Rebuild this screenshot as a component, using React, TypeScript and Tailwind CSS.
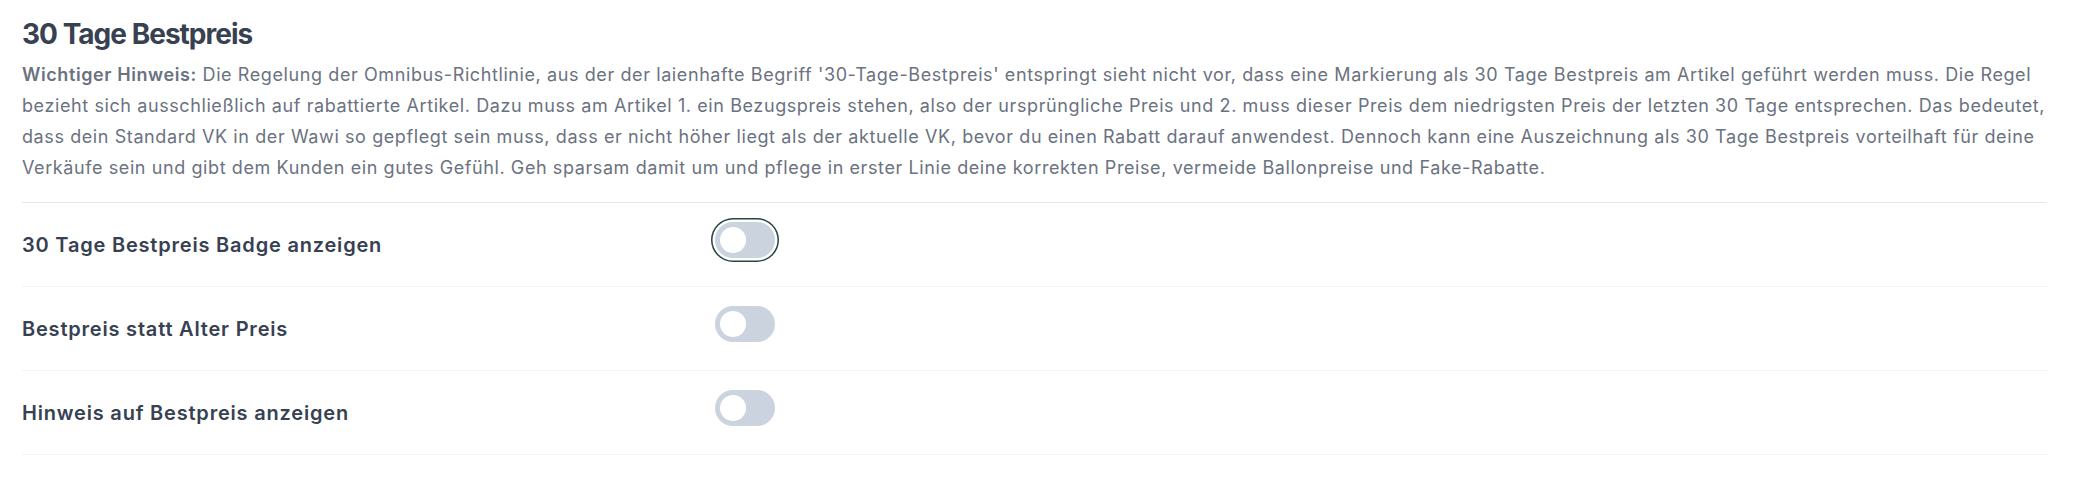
import React, { useState } from 'react';

type Setting = {
  id: string;
  label: string;
  focused?: boolean;
};

const SETTINGS: Setting[] = [
  { id: 'badge', label: '30 Tage Bestpreis Badge anzeigen', focused: true },
  { id: 'statt', label: 'Bestpreis statt Alter Preis' },
  { id: 'hinweis', label: 'Hinweis auf Bestpreis anzeigen' },
];

function Toggle({ on, focused, onChange }: { on: boolean; focused?: boolean; onChange: () => void }) {
  return (
    <button
      type="button"
      role="switch"
      aria-checked={on}
      onClick={onChange}
      className={`relative flex h-[36px] w-[60px] shrink-0 items-center rounded-full px-[5px] transition-colors ${
        on ? 'bg-[#274542]' : 'bg-[#cbd3df]'
      } ${focused ? 'ring-[1.5px] ring-[#274542] ring-offset-[2.5px] ring-offset-white' : ''}`}
    >
      <span
        className={`block h-[26px] w-[26px] rounded-full bg-white transition-transform ${
          on ? 'translate-x-[24px]' : 'translate-x-0'
        }`}
      />
    </button>
  );
}

export default function App() {
  const [values, setValues] = useState<Record<string, boolean>>({
    badge: false,
    statt: false,
    hinweis: false,
  });

  return (
    <div className="min-h-screen bg-white pl-[22px] pr-[29px] font-['Inter',sans-serif]">
      {/* Header */}
      <div className="border-b border-[#e5e7eb] pt-[18px] pb-[19px]">
        <h2 className="text-[28px] leading-[32px] font-bold tracking-[-0.035em] text-[#374151]">30 Tage Bestpreis</h2>
        <p className="mt-[9px] mr-[-4px] text-[18px] leading-[31px] tracking-[0.033em] text-[#6b7280]">
          <span className="font-semibold">Wichtiger Hinweis:</span> Die Regelung der Omnibus-Richtlinie, aus der der
          laienhafte Begriff '30-Tage-Bestpreis' entspringt sieht nicht vor, dass eine Markierung als 30 Tage Bestpreis
          am Artikel geführt werden muss. Die Regel bezieht sich ausschließlich auf rabattierte Artikel. Dazu muss am
          Artikel 1. ein Bezugspreis stehen, also der ursprüngliche Preis und 2. muss dieser Preis dem niedrigsten Preis
          der letzten 30 Tage entsprechen. Das bedeutet, dass dein Standard VK in der Wawi so gepflegt sein muss, dass er
          nicht höher liegt als der aktuelle VK, bevor du einen Rabatt darauf anwendest. Dennoch kann eine Auszeichnung
          als 30 Tage Bestpreis vorteilhaft für deine Verkäufe sein und gibt dem Kunden ein gutes Gefühl. Geh sparsam
          damit um und pflege in erster Linie deine korrekten Preise, vermeide Ballonpreise und Fake-Rabatte.
        </p>
      </div>

      {/* Settings rows */}
      {SETTINGS.map((s) => (
        <div key={s.id} className="flex h-[84px] items-center border-b border-[#f1f3f5]">
          <div className="w-[693px] shrink-0 text-[20px] leading-7 font-semibold tracking-[0.04em] text-[#374151]">
            {s.label}
          </div>
          <div className="mb-[10px]">
            <Toggle
              on={values[s.id]}
              focused={s.focused}
              onChange={() => setValues((v) => ({ ...v, [s.id]: !v[s.id] }))}
            />
          </div>
        </div>
      ))}
    </div>
  );
}
